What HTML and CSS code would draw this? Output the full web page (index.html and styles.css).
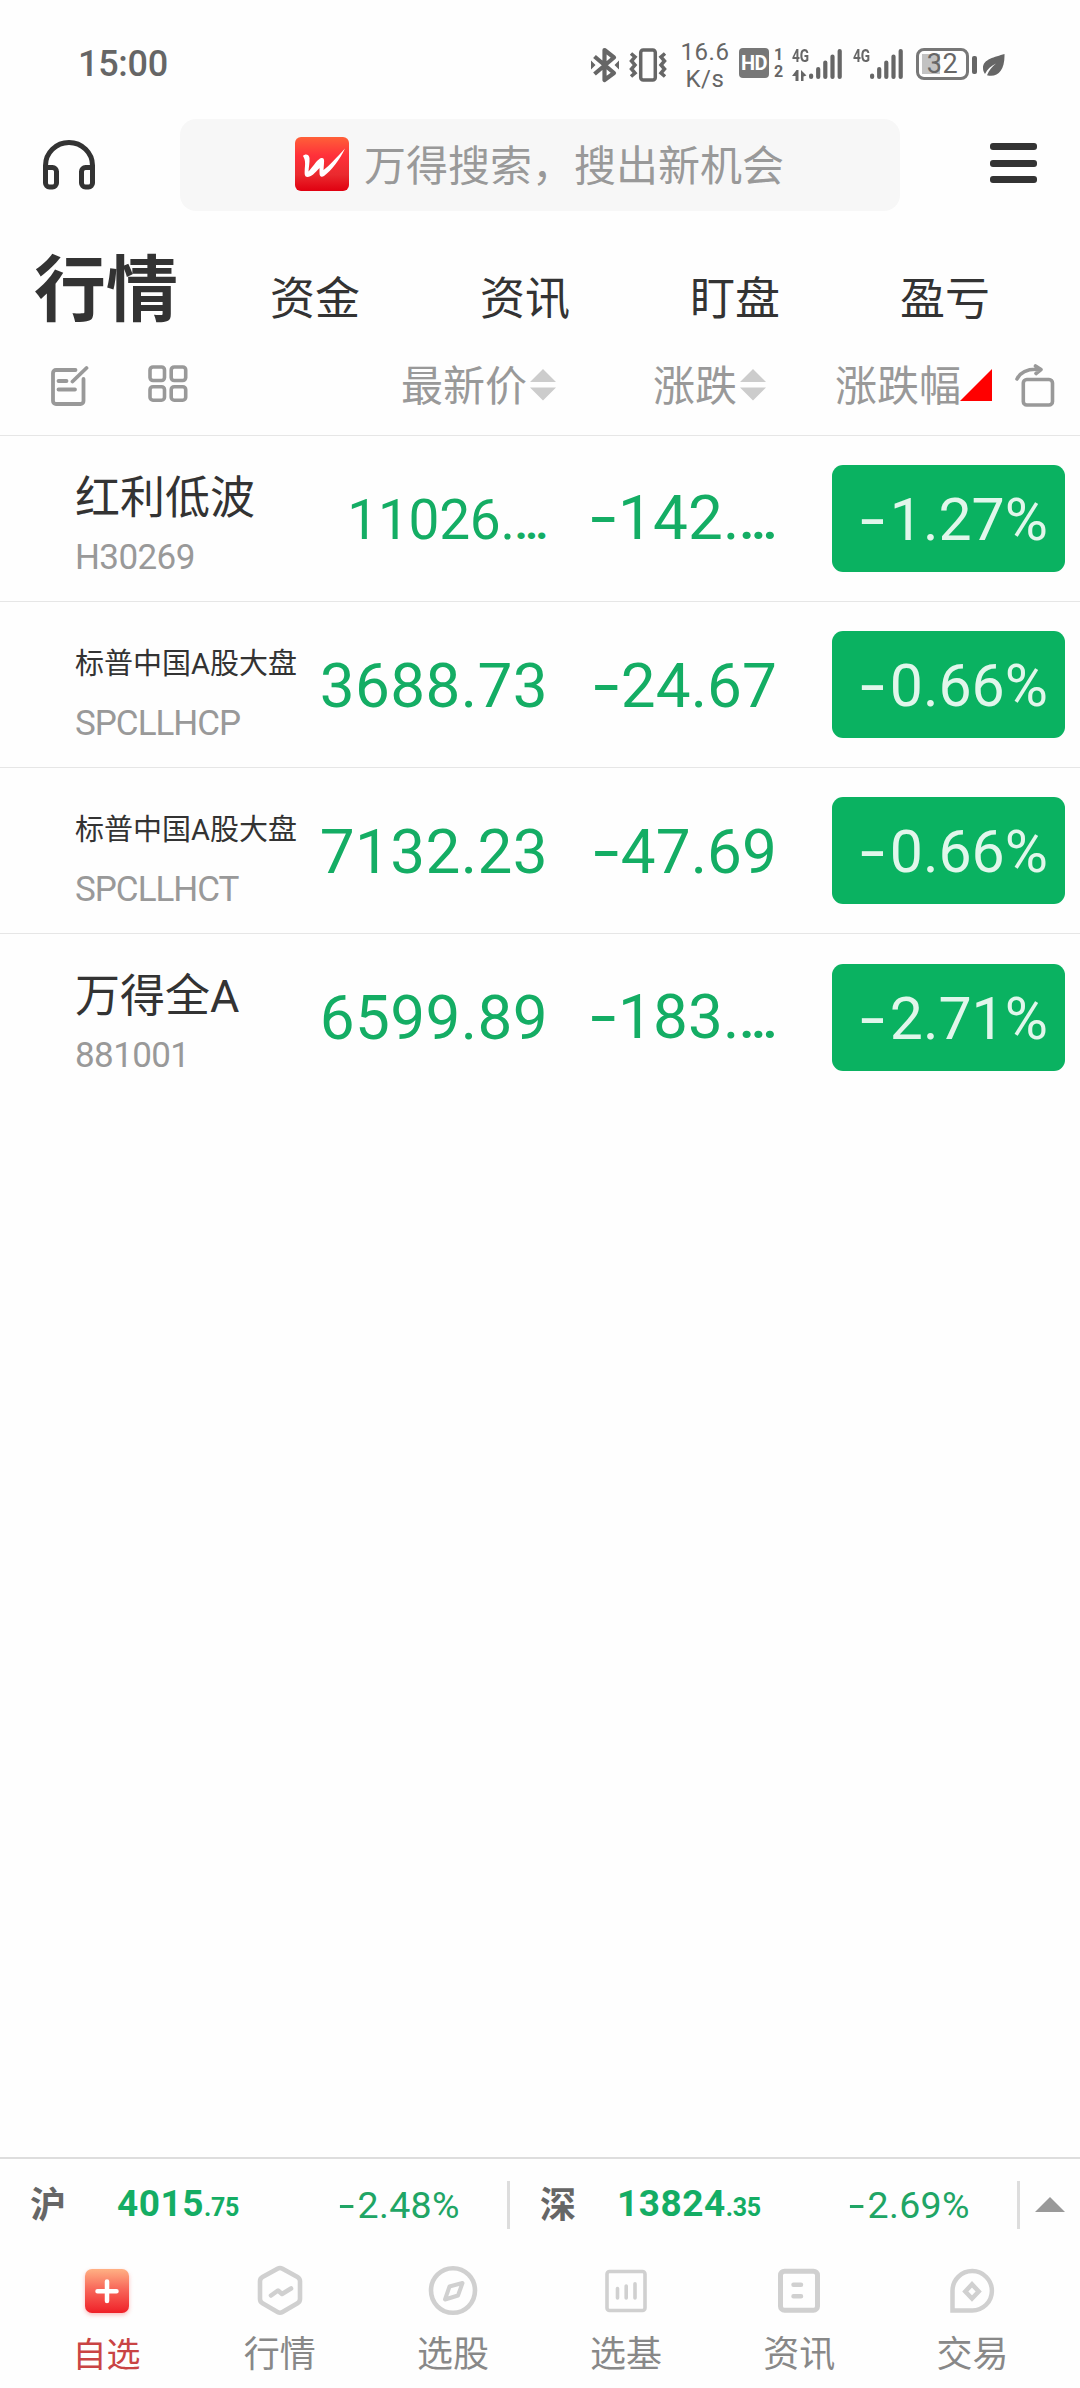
FILE: index.html
```html
<!DOCTYPE html>
<html lang="zh-CN">
<head>
<meta charset="utf-8">
<title>行情</title>
<link rel="stylesheet" href="styles.css">
</head>
<body>
<div class="screen">
  <div class="status">
    <span class="clock">15:00</span>
    <div class="status-right">
      <svg class="bt" width="30" height="36" viewBox="0 0 30 36" fill="none" stroke="#666" stroke-width="4.2" stroke-linejoin="round"><path d="M4.5 9.5 24 26 14.5 33V3L24 10.5 4.5 27"/><path d="M1 13.5 5.5 18 1 22.500zM29 13.500 24.500 18 29 22.500z" fill="#666" stroke="none"/></svg>
      <svg class="vib" width="38" height="36" viewBox="0 0 38 36" fill="none" stroke="#666" stroke-width="3.500"><rect x="11.700" y="3" width="14.600" height="30" rx="2.500"/><path d="M2 6.500 6 10 2.500 14 6 18 2.500 22 6 26 2 29.500M36 6.500 32 10 35.500 14 32 18 35.500 22 32 26 36 29.500"/></svg>
      <div class="speed"><span>16.6</span><span>K/s</span></div>
      <span class="hd">HD</span>
      <div class="sims"><span>1</span><span>2</span></div>
      <div class="net">
        <div class="net-type"><span>4G</span><svg width="15" height="12" viewBox="0 0 15 12" fill="#666"><path d="M0 6 4.500 0H6.500V11H3.500V6zM9 0 14.500 5.500 11.500 6.500V11H9z"/></svg></div>
        <svg class="bars" width="34" height="32" viewBox="0 0 34 32" stroke="#666" stroke-width="4.200" stroke-linecap="round"><path d="M2.100 27.500v1.500M9.200 21v8M16.300 14.500v14.500M23.500 8.500v20.500M30.700 3v26"/></svg>
      </div>
      <div class="net second">
        <div class="net-type"><span>4G</span></div>
        <svg class="bars" width="34" height="32" viewBox="0 0 34 32" stroke="#666" stroke-width="4.200" stroke-linecap="round"><path d="M2.100 27.500v1.500M9.200 21v8M16.300 14.500v14.500M23.500 8.500v20.500M30.700 3v26"/></svg>
      </div>
      <div class="battery">32</div>
      <span class="battery-tip"></span>
      <svg class="leaf" width="22" height="22" viewBox="0 0 22 22"><path d="M21.500 0C12 3 0 5 0 14c0 3 1 4.500 2 6 2.500-5 6-8 11-10.500C9 13 6 16 4 21.200 14 24 22 17 21.500 0z" fill="#666"/></svg>
    </div>
  </div>

  <header class="topbar">
    <svg class="headphones" width="52" height="50" viewBox="0 0 52 50" fill="none" stroke="#333" stroke-width="5"><path d="M2.500 28V25.500a23.500 23 0 0 1 47 0V28"/><path d="M2.500 27.500H9.500a4 4 0 0 1 4 4V43a4 4 0 0 1-4 4H6.500a4 4 0 0 1-4-4zM49.500 27.500H42.500a4 4 0 0 0-4 4V43a4 4 0 0 0 4 4h3a4 4 0 0 0 4-4z"/></svg>
    <div class="search">
      <svg width="56" height="56" viewBox="-1 -1 56 56"><defs><linearGradient id="wl" x1="0" y1="0" x2="0" y2="1"><stop offset="0" stop-color="#ff6038"/><stop offset=".35" stop-color="#ff303a"/><stop offset=".7" stop-color="#ea2a2e"/><stop offset="1" stop-color="#e00010"/></linearGradient></defs><rect width="54" height="54" rx="6" fill="url(#wl)"/><path d="M8 19C10 16.500 14 17 14.500 21c.3 5-.8 9-1 13.500C17 31 21 24 25 21.500c3.500-1.500 4.500.5 4 4.500L28.500 33C34 29 42 20 50 11.500 45 22 37 33 29 39c-3 2-4.500 0-4.500-3V31C20 36 16 40 12.500 40c-3 0-3-3-2.800-7C10 28 11 24 8 19z" fill="#fff"/></svg>
      <span>万得搜索，搜出新机会</span>
    </div>
    <div class="menu"><i></i><i></i><i></i></div>
  </header>

  <nav class="tabs">
    <span class="tab active">行情</span><span class="tab">资金</span><span class="tab">资讯</span><span class="tab">盯盘</span><span class="tab">盈亏</span>
  </nav>

  <div class="cols">
    <div class="tools">
      <svg width="38" height="42" viewBox="0 0 38 42" fill="none" stroke="#999" stroke-width="3.800" stroke-linecap="round" stroke-linejoin="round"><path d="M24.500 5H5a3 3 0 0 0-3 3V36a3 3 0 0 0 3 3H29.500a3 3 0 0 0 3-3V14M7.500 16H15.500M7.500 24.500H24"/><path d="M21.500 16.500 35.500 3"/></svg>
      <svg width="40" height="40" viewBox="0 0 40 40" fill="none" stroke="#999" stroke-width="3.600"><rect x="2" y="2" width="14.500" height="13.500" rx="3"/><rect x="23.200" y="2" width="14.500" height="13.500" rx="3"/><rect x="2" y="21.700" width="14.500" height="13.500" rx="3"/><rect x="23.200" y="21.700" width="14.500" height="13.500" rx="3"/></svg>
    </div>
    <div class="col price-h">最新价<svg class="sort" width="26" height="32" viewBox="0 0 26 32" fill="#ccc"><path d="M13 0 26 13H0zM0 18.500H26L13 31.500z"/></svg></div>
    <div class="col chg-h">涨跌<svg class="sort" width="26" height="32" viewBox="0 0 26 32" fill="#ccc"><path d="M13 0 26 13H0zM0 18.500H26L13 31.500z"/></svg></div>
    <div class="col pct-h">涨跌幅<svg class="tri" width="32" height="32" viewBox="0 0 32 32" fill="#f00"><path d="M32 0V32H0z"/></svg></div>
    <svg class="rotate" width="40" height="44" viewBox="0 0 40 44" fill="none" stroke="#999" stroke-width="3.600" stroke-linecap="round" stroke-linejoin="round"><rect x="8.300" y="15.500" width="29.200" height="25.500" rx="3.500"/><path d="M2 15C5.500 8 14 4.500 25 5.500M20.500 2 26 5.500 21 9.500"/></svg>
  </div>

  <main class="list">
    <div class="row">
      <div class="name"><b class="big">红利低波</b><small>H30269</small></div>
      <div class="price small">11026.<span class="dots">…</span></div>
      <div class="chg"><i>-</i>142.<span class="dots">…</span></div>
      <div class="pill"><i>-</i>1.27%</div>
    </div>
    <div class="row">
      <div class="name"><b>标普中国A股大盘</b><small class="caps">SPCLLHCP</small></div>
      <div class="price">3688.73</div>
      <div class="chg"><i>-</i>24.67</div>
      <div class="pill"><i>-</i>0.66%</div>
    </div>
    <div class="row">
      <div class="name"><b>标普中国A股大盘</b><small class="caps">SPCLLHCT</small></div>
      <div class="price">7132.23</div>
      <div class="chg"><i>-</i>47.69</div>
      <div class="pill"><i>-</i>0.66%</div>
    </div>
    <div class="row">
      <div class="name"><b class="big">万得全A</b><small>881001</small></div>
      <div class="price">6599.89</div>
      <div class="chg"><i>-</i>183.<span class="dots">…</span></div>
      <div class="pill"><i>-</i>2.71%</div>
    </div>
  </main>

  <div class="ticker">
    <div class="index sh"><span class="mkt">沪</span><span class="val">4015<em>.75</em></span><span class="pct"><i>-</i>2.48%</span></div>
    <div class="index sz"><span class="mkt">深</span><span class="val">13824<em>.35</em></span><span class="pct"><i>-</i>2.69%</span></div>
    <svg class="up" width="30" height="15" viewBox="0 0 30 15" fill="#999"><path d="M15 0 30 15H0z"/></svg>
  </div>

  <footer class="nav">
    <div class="item on"><svg width="52" height="52" viewBox="0 0 52 52"><defs><linearGradient id="zx" x1="0" y1="0" x2="0" y2="1"><stop offset="0" stop-color="#ffb184"/><stop offset=".45" stop-color="#f8685a"/><stop offset="1" stop-color="#ef2028"/></linearGradient></defs><rect x="4" y="4" width="44" height="44" rx="7" fill="url(#zx)"/><path d="M26 16.500V36M16.500 26.300H35.500" stroke="#fff" stroke-width="4.500" stroke-linecap="round"/></svg><span>自选</span></div>
    <div class="item"><svg width="52" height="52" viewBox="0 0 52 52" fill="none" stroke="#d0d0d0" stroke-width="4.600" stroke-linecap="round" stroke-linejoin="round"><path d="M23.500 3.700a5 5 0 0 1 5 0L43.500 12a5 5 0 0 1 2.500 4.300V34a5 5 0 0 1-2.500 4.300L28.500 47a5 5 0 0 1-5 0L8.500 38.300A5 5 0 0 1 6 34V16.300A5 5 0 0 1 8.500 12z"/><path d="M17 30.500 24 25.500 28 29 37 23.500"/></svg><span>行情</span></div>
    <div class="item"><svg width="52" height="52" viewBox="0 0 52 52" fill="none" stroke="#d0d0d0" stroke-width="4.600" stroke-linejoin="round"><ellipse cx="26" cy="25.500" rx="22" ry="22.300"/><path d="M18 34.500 22.500 21.500 35.500 18 31 30.500z" stroke-width="4"/></svg><span>选股</span></div>
    <div class="item"><svg width="52" height="52" viewBox="0 0 52 52" fill="none" stroke="#d0d0d0" stroke-width="3.600" stroke-linecap="round"><rect x="7" y="6.500" width="38" height="39" rx="2.500"/><path d="M17.500 23.500V33M26.200 21V33M35 18.700V33"/></svg><span>选基</span></div>
    <div class="item"><svg width="52" height="52" viewBox="0 0 52 52" fill="none" stroke="#d0d0d0" stroke-width="5" stroke-linecap="round"><rect x="7.500" y="6.200" width="37" height="39" rx="4"/><path d="M20.500 19.700H28M20.500 31.300H28" stroke-width="4.500"/></svg><span>资讯</span></div>
    <div class="item"><svg width="52" height="52" viewBox="0 0 52 52" fill="none" stroke="#d0d0d0" stroke-width="4.500"><path d="M6.500 45.500V25.500a19.700 19.700 0 1 1 19.700 20z"/><path d="M26 19.300 32.700 26.500 26 33.500 19.300 26.500z"/></svg><span>交易</span></div>
  </footer>
</div>
</body>
</html>
```

FILE: styles.css
```css
* { box-sizing: border-box; }
body { margin: 0; background: #fefefe; }
.screen {
  width: 1080px;
  height: 2388px;
  display: flex;
  flex-direction: column;
  font-family: Roboto, "Noto Sans CJK SC", sans-serif;
  color: #333;
  overflow: hidden;
}
svg { display: block; flex: none; }
i, em { font-style: normal; }
.row i, .ticker i {
  display: inline-block;
  font-family: Inter, sans-serif;
  transform: scaleX(1.12);
}

/* status bar */
.status {
  height: 119px;
  padding: 11px 75px 0 78px;
  display: flex;
  justify-content: space-between;
  color: #666;
  align-items: flex-start;
}
.clock { font-size: 36px; line-height: 107px; letter-spacing: -.3px; font-weight: 500; }
.status-right { display: flex; align-items: flex-start; padding-top: 36px; }
.bt { margin-right: 9px; }
.vib { margin-right: 11px; }
.speed {
  width: 54px;
  margin-top: -8px;
  display: flex;
  flex-direction: column;
  align-items: center;
  font-size: 24px;
  line-height: 26.5px;
  letter-spacing: .6px;
}
.hd {
  width: 30px;
  height: 30px;
  margin: 1px 5px 0 7px;
  border-radius: 4px;
  background: #777;
  color: #fff;
  font-size: 20px;
  font-weight: 700;
  line-height: 31px;
  text-align: center;
  letter-spacing: -.5px;
}
.sims { width: 11px; display: flex; flex-direction: column; font-size: 16px; font-weight: 700; line-height: 16.500px; }
.net { display: flex; margin-left: 7px; padding-top: 1px; }
.net-type { width: 17px; font-size: 18px; line-height: 16px; font-weight: 700; display: flex; flex-direction: column; gap: 5px; }
.net-type span { transform: scaleX(.76); transform-origin: 0 0; }
.net-type svg { margin-top: 1px; }
.second { margin-left: 10px; }
.battery {
  width: 53px;
  height: 32px;
  margin: 1px 3px 0 12px;
  border: 3px solid #777;
  border-radius: 8px;
  background: linear-gradient(#c2c2c2, #c2c2c2) 3px 3px / 18px 20px no-repeat;
  font-size: 27px;
  line-height: 27px;
  letter-spacing: .5px;
  text-align: center;
}
.battery-tip { width: 5px; height: 18px; margin: 9px 6px 0 0; border-radius: 2px; background: #666; }
.leaf { margin-top: 7px; }

/* top bar */
.topbar { height: 92px; display: flex; align-items: center; padding: 0 43px; justify-content: space-between; }
.search {
  width: 720px;
  height: 92px;
  margin-left: 39px;
  border-radius: 16px;
  background: #f7f7f7;
  color: #999;
  display: flex;
  align-items: center;
  padding-left: 114px;
  gap: 14px;
  font-size: 42px;
}
.search svg { margin-top: -2px; }
.search span { line-height: 60px; margin-top: 3px; white-space: nowrap; }
.menu { width: 47px; display: flex; flex-direction: column; gap: 9.700px; margin: -4px 0 0 44px; }
.menu i { height: 7px; border-radius: 3px; background: #333; }

/* section tabs */
.tabs { height: 127px; display: flex; }
.tab { width: 210px; text-align: center; font-size: 45px; line-height: 178px; }
.tab.active { padding-left: 2px; font-size: 72px; font-weight: 700; line-height: 159px; }

/* column headings */
.cols {
  height: 98px;
  border-bottom: 1px solid #e6e6e6;
  display: flex;
  align-items: flex-start;
  font-size: 42px;
  color: #999;
  padding: 0 24px 0 51px;
}
.tools { display: flex; gap: 59px; padding-top: 27px; width: 350px; }
.col { display: flex; gap: 3px; line-height: 97px; white-space: nowrap; }
.price-h { width: 252px; }
.chg-h { width: 182px; }
.pct-h { width: 180px; gap: 0; }
.sort { margin-top: 31px; }
.tri { margin-top: 31px; margin-left: -1px; }
.rotate { margin-top: 26px; }

/* watch list */
.list { flex: 1; }
.row { height: 166px; border-bottom: 1px solid #e6e6e6; display: flex; align-items: center; padding-right: 15px; }
.row:last-child { border-bottom: 0; }
.name { width: 298px; padding-left: 75px; align-self: stretch; display: flex; flex-direction: column; white-space: nowrap; }
.name b { font-weight: 400; font-size: 29px; line-height: 124px; }
.name b.big { font-size: 45px; line-height: 125px; }
.name small { font-size: 35px; line-height: 40px; margin-top: -22px; color: #999; letter-spacing: -.6px; }
.name b.big + small { margin-top: -23px; }
.name small.caps { letter-spacing: -1px; }
.price, .chg { padding-top: 2px; font-size: 62px; line-height: 80px; color: #14ad64; text-align: right; white-space: nowrap; letter-spacing: .4px; }
.price { width: 250px; }
.price.small { font-size: 55px; padding-top: 7px; letter-spacing: -.3px; }
.chg { width: 229px; letter-spacing: .1px; }
.dots { letter-spacing: 0; font-size: .82em; font-weight: 700; }
.pill {
  width: 233px;
  height: 107px;
  margin-left: auto;
  padding-right: 17px;
  border-radius: 11px;
  background: #0ab261;
  color: #e1f6eb;
  font-size: 59px;
  line-height: 108px;
  text-align: right;
}
.pill i { margin-right: 4px; }

/* index ticker */
.ticker { height: 93px; border-top: 2px solid #ddd; display: flex; align-items: center; }
.index { width: 510px; height: 48px; border-right: 3px solid #ddd; display: flex; align-items: center; white-space: nowrap; line-height: 50px; }
.mkt { width: 117px; padding: 2px 0 0 30px; font-size: 36px; font-weight: 700; color: #666; }
.sz .mkt { width: 107px; }
.val { width: 221px; padding-top: 3px; color: #14ad64; font-size: 37px; font-weight: 700; letter-spacing: .5px; }
.sz .val { width: 231px; }
.val em { font-size: 25px; letter-spacing: -.2px; }
.pct { color: #20a565; font-size: 37.5px; letter-spacing: .3px; }
.pct i { margin-right: 2px; }
.up { margin-left: 15px; }

/* bottom navigation */
.nav { height: 138px; padding: 15px 21px 0 20px; display: flex; }
.item { flex: 1; display: flex; flex-direction: column; align-items: center; font-size: 36px; line-height: 50px; color: #888; }
.item span { margin-top: 13px; }
.item.on { color: #c94444; }
.item.on span { font-size: 34px; }
.item.on svg { filter: drop-shadow(0 2px 2px rgba(240, 40, 40, .3)); }
```
